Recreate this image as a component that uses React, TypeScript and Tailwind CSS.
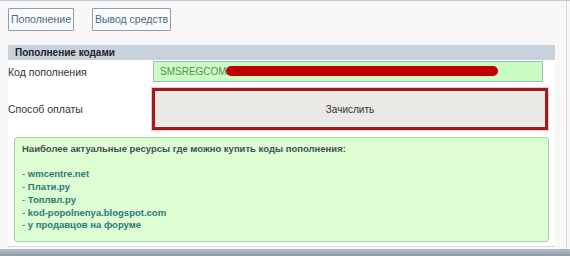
export default function App() {
  const font = { fontFamily: '"Liberation Sans", Arial, sans-serif' };
  const dash = <span className="text-[#4a4f52] font-normal">- </span>;
  return (
    <div
      className="relative w-[570px] h-[256px] overflow-hidden bg-[#f7f7f7] border-t border-[#c4c8d0]"
      style={font}
    >
      <div className="flex flex-col w-[567px] h-[249px] border-r border-[#d9dbe0]">
        <div className="flex pl-[8px] pt-[7px] gap-[18px]">
          <div className="h-[23px] w-[66px] flex items-center justify-center border border-[#8aa0b4] bg-[#fafafa] text-[10.5px] text-[#4c6c84] rounded-[1px]">
            Пополнение
          </div>
          <div className="h-[23px] w-[79px] flex items-center justify-center border border-[#8aa0b4] bg-[#fafafa] text-[10.5px] text-[#4c6c84] rounded-[1px]">
            Вывод средств
          </div>
        </div>
        <div className="ml-[8px] w-[547px] mt-[14px] bg-white flex flex-col">
          <div className="h-[15px] bg-[#c8d2dd] flex items-center pl-[7px] text-[10px] font-bold text-[#1e2228]">
            Пополнение кодами
          </div>
          <div className="flex items-center h-[22px]">
            <div className="w-[145px] pt-[3px] text-[10.5px] text-[#333]">Код пополнения</div>
            <div className="w-[390px] h-[21px] bg-[#ccfcc4] border border-[#9cb8c8] flex items-center pl-[6px] rounded-[1px]">
              <span className="text-[10px] text-[#5b8c5e]">SMSREGCOM</span>
              <div className="w-[272px] h-[10px] bg-[#c00000] rounded-full ml-[-1px]" />
            </div>
          </div>
          <div className="flex items-center mt-[6px] h-[42px]">
            <div className="w-[144px] pt-[2px] text-[10.5px] text-[#333]">Способ оплаты</div>
            <div className="w-[396px] h-[42px] border-[3px] border-[#9e1c1c] bg-[#ebe9e5] flex items-center justify-center text-[10px] text-[#333] shadow-[0_0_0_1px_#f3c6c0]">
              Зачислить
            </div>
          </div>
          <div className="ml-[6px] mt-[7px] w-[535px] h-[105px] bg-[#ddfdd2] border border-[#a8d2a0] rounded-[3px] px-[7px] pt-[5px] text-[9.5px] leading-[12.75px] font-bold">
            <div className="text-[#4a4f52]">Наиболее актуальные ресурсы где можно купить коды пополнения:</div>
            <div className="h-[12.5px]" />
            <div className="text-[#2c7a72]">{dash}wmcentre.net</div>
            <div className="text-[#2c7a72]">{dash}Плати.ру</div>
            <div className="text-[#2c7a72]">{dash}Топлвл.ру</div>
            <div className="text-[#2c7a72]">{dash}kod-popolnenya.blogspot.com</div>
            <div className="text-[#2c7a72]">{dash}у продавцов на форуме</div>
          </div>
          <div className="h-[4px]" />
          <div className="h-px bg-[#d6d8dc]" />
        </div>
      </div>
      <div className="absolute left-0 bottom-0 w-[570px] h-[7px] bg-gradient-to-b from-[#b7bec8] to-[#8d97a5]" />
    </div>
  );
}
